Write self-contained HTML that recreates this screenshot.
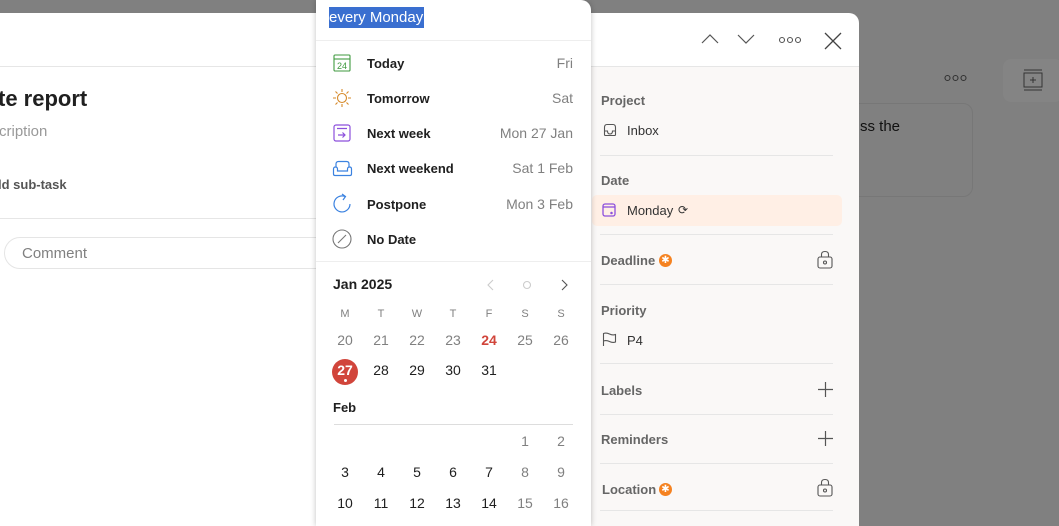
<!DOCTYPE html>
<html><head><meta charset="utf-8"><style>
*{margin:0;padding:0;box-sizing:border-box}
html,body{width:1059px;height:526px;overflow:hidden}
body{background:#808080;font-family:"Liberation Sans",sans-serif;position:relative;color:#202020}
.a{position:absolute}
.modal{left:0;top:13px;width:859px;height:513px;background:#fff;border-radius:0 10px 0 0;overflow:hidden}
.side{left:591px;top:67px;width:268px;height:459px;background:#faf8f7}
.lbl{font-size:13px;color:#666;font-weight:bold}
.hr{height:1px;background:#e6e6e6}
.pop{left:316px;top:0;width:275px;height:526px;background:#fff;border-radius:0 10px 0 0;box-shadow:0 0 6px rgba(0,0,0,.25)}
.it{font-size:13px;font-weight:bold;color:#202020}
.rt{font-size:14px;color:#808080;right:18px;text-align:right}
.cal{font-size:14px;text-align:center;width:30px;margin-left:-15px}
.wd{font-size:11px;color:#808080;text-align:center;width:30px;margin-left:-15px}
svg{position:absolute}
</style></head><body>
<svg style="left:944px;top:73px" width="24" height="10" fill="none" stroke="#333" stroke-width="1.1"><circle cx="3.5" cy="5" r="2.5"/><circle cx="11.5" cy="5" r="2.5"/><circle cx="19.5" cy="5" r="2.5"/></svg>
<div class="a" style="left:1003px;top:59px;width:60px;height:43px;background:#848484;border-radius:8px"></div>
<svg style="left:1022px;top:69px" width="22" height="22" viewBox="0 0 22 22" fill="none" stroke="#333" stroke-width="1"><path d="M2 1h18M2 21h18"/><rect x="2" y="4" width="18" height="14"/><path d="M11 8v6M8 11h6"/></svg>
<div class="a" style="left:820px;top:103px;width:153px;height:94px;border:1px solid #777;border-radius:10px"></div>
<div class="a" style="left:860px;top:118px;font-size:15px;color:#111">ss the</div>

<div class="a modal">
  <div class="a hr" style="left:0;top:53px;width:859px"></div>
  <div class="a" style="left:-2px;top:73px;font-size:22px;font-weight:bold;color:#202020">te report</div>
  <div class="a" style="left:-1px;top:110px;font-size:15px;color:#999">cription</div>
  <div class="a" style="left:-2px;top:164px;font-size:13px;color:#555;font-weight:bold">ld sub-task</div>
  <div class="a hr" style="left:0;top:205px;width:330px"></div>
  <div class="a" style="left:4px;top:224px;width:340px;height:32px;border:1px solid #e5e5e5;border-radius:16px"></div>
  <div class="a" style="left:22px;top:232px;font-size:15px;color:#808080">Comment</div>

  <svg style="left:700px;top:19px" width="20" height="14"><path d="M2 11l8-8 8 8" fill="none" stroke="#555" stroke-width="1.2"/></svg>
  <svg style="left:736px;top:19px" width="20" height="14"><path d="M2 3l8 8 8-8" fill="none" stroke="#555" stroke-width="1.2"/></svg>
  <svg style="left:778px;top:22px" width="24" height="10" fill="none" stroke="#555" stroke-width="1.1"><circle cx="4" cy="5" r="2.5"/><circle cx="12" cy="5" r="2.5"/><circle cx="20" cy="5" r="2.5"/></svg>
  <svg style="left:824px;top:19px" width="18" height="18"><path d="M1 1l16 16M17 1L1 17" stroke="#444" stroke-width="1.3"/></svg>
</div>

<div class="a side"></div>
<div class="a lbl" style="left:601px;top:93px">Project</div>
<svg style="left:603px;top:123px" width="14" height="14" fill="none" stroke="#555" stroke-width="1.1"><path d="M1.5 8V4.5Q1.5 1.5 4 1.5h6q2.5 0 2.5 3V8M1.5 8v3.5q0 1 1 1h9q1 0 1-1V8M1.5 8h3q0 3 2.5 3t2.5-3h3"/></svg>
<div class="a" style="left:627px;top:123px;font-size:13px;color:#333">Inbox</div>
<div class="a hr" style="left:600px;top:155px;width:233px"></div>
<div class="a lbl" style="left:601px;top:173px">Date</div>
<div class="a" style="left:592px;top:195px;width:250px;height:31px;background:#ffefe5;border-radius:5px"></div>
<svg style="left:602px;top:203px" width="14" height="14" fill="none" stroke="#8c4fdc" stroke-width="1.3"><rect x="1" y="1" width="12" height="12" rx="2"/><path d="M1 4h12"/><circle cx="9.5" cy="10" r=".6" fill="#8c4fdc"/></svg>
<div class="a" style="left:627px;top:203px;font-size:13px;color:#333">Monday</div>
<div class="a" style="left:678px;top:203px;font-size:12px;color:#333">⟳</div>
<div class="a hr" style="left:600px;top:234px;width:233px"></div>
<div class="a lbl" style="left:601px;top:253px">Deadline</div>
<div class="a" style="left:659px;top:254px;width:13px;height:13px;border-radius:50%;background:#f58220;color:#fff;font-size:10px;text-align:center;line-height:13px">✱</div>
<svg style="left:817px;top:250px" width="16" height="19" fill="none" stroke="#555" stroke-width="1.1"><path d="M4.5 7V4.5q0-3 3.5-3t3.5 3V7"/><rect x="1" y="7" width="14" height="11" rx="2"/><circle cx="8" cy="12.5" r="1.5"/></svg>
<div class="a hr" style="left:600px;top:284px;width:233px"></div>
<div class="a lbl" style="left:601px;top:303px">Priority</div>
<svg style="left:602px;top:332px" width="16" height="14" fill="none" stroke="#555" stroke-width="1.1"><path d="M1.5 14V1.5q3-1 6 0.5t6 0.5v7.5q-3 1-6-.5t-6-.5"/></svg>
<div class="a" style="left:627px;top:333px;font-size:13px;color:#333">P4</div>
<div class="a hr" style="left:600px;top:363px;width:233px"></div>
<div class="a lbl" style="left:601px;top:383px">Labels</div>
<svg style="left:818px;top:382px" width="15" height="15"><path d="M7.5 0v15M0 7.5h15" stroke="#555" stroke-width="1.2"/></svg>
<div class="a hr" style="left:600px;top:414px;width:233px"></div>
<div class="a lbl" style="left:601px;top:432px">Reminders</div>
<svg style="left:818px;top:431px" width="15" height="15"><path d="M7.5 0v15M0 7.5h15" stroke="#555" stroke-width="1.2"/></svg>
<div class="a hr" style="left:600px;top:463px;width:233px"></div>
<div class="a lbl" style="left:602px;top:482px">Location</div>
<div class="a" style="left:659px;top:483px;width:13px;height:13px;border-radius:50%;background:#f58220;color:#fff;font-size:10px;text-align:center;line-height:13px">✱</div>
<svg style="left:817px;top:478px" width="16" height="19" fill="none" stroke="#555" stroke-width="1.1"><path d="M4.5 7V4.5q0-3 3.5-3t3.5 3V7"/><rect x="1" y="7" width="14" height="11" rx="2"/><circle cx="8" cy="12.5" r="1.5"/></svg>
<div class="a hr" style="left:600px;top:510px;width:233px"></div>

<div class="a pop">
  <div class="a" style="left:13px;top:7px;height:21px;background:#3a6fd0;color:#fff;font-size:15px;line-height:21px;padding-right:1px">every Monday</div>
  <div class="a hr" style="left:0;top:40px;width:275px;background:#eee"></div>
  <svg style="left:17px;top:54px" width="18" height="18" fill="none" stroke="#3f9a3f" stroke-width="1.1"><rect x="1" y="1" width="16" height="16" rx="1"/><path d="M1 5h16"/><text x="9" y="15" font-size="9" fill="#3f9a3f" stroke="none" text-anchor="middle" font-family="Liberation Sans">24</text></svg>
  <svg style="left:16px;top:88px" width="20" height="20" fill="none" stroke="#d68a2a" stroke-width="1.1"><circle cx="10" cy="10" r="4.5"/><path d="M10 1v3M10 16v3M1 10h3M16 10h3M3.5 3.5l2 2M14.5 14.5l2 2M3.5 16.5l2-2M14.5 5.5l2-2"/></svg>
  <svg style="left:17px;top:124px" width="18" height="18" fill="none" stroke="#8c4fdc" stroke-width="1.2"><rect x="1" y="1" width="16" height="16" rx="2"/><path d="M4 4.5h10M5 11h7M9.5 8.5l2.5 2.5-2.5 2.5"/></svg>
  <svg style="left:16px;top:160px" width="21" height="17" fill="none" stroke="#3b82e0" stroke-width="1.2"><path d="M4 7V4q0-2.5 2.5-2.5h8Q17 1.5 17 4v3M1.5 9q0-2 2-2t2 2v2h10V9q0-2 2-2t2 2v5q0 1.5-1.5 1.5h-15Q1.5 15.5 1.5 14z"/></svg>
  <svg style="left:16px;top:193px" width="20" height="22" fill="none" stroke="#3b82e0" stroke-width="1.2"><path d="M13 3.5A8 8 0 1 0 18 11"/><path d="M10 1l3.5 2.5L11 7"/></svg>
  <svg style="left:16px;top:229px" width="20" height="20" fill="none" stroke="#777" stroke-width="1.1"><circle cx="10" cy="10" r="9"/><path d="M6 14l8-8"/></svg>
  <div class="a it" style="left:51px;top:56px">Today</div><div class="a rt" style="top:55px">Fri</div>
  <div class="a it" style="left:51px;top:91px">Tomorrow</div><div class="a rt" style="top:90px">Sat</div>
  <div class="a it" style="left:51px;top:126px">Next week</div><div class="a rt" style="top:125px">Mon 27 Jan</div>
  <div class="a it" style="left:51px;top:161px">Next weekend</div><div class="a rt" style="top:160px">Sat 1 Feb</div>
  <div class="a it" style="left:51px;top:197px">Postpone</div><div class="a rt" style="top:196px">Mon 3 Feb</div>
  <div class="a it" style="left:51px;top:232px">No Date</div>
  <div class="a hr" style="left:0;top:261px;width:275px;background:#eee"></div>
  <div class="a" style="left:17px;top:276px;font-size:14px;font-weight:bold">Jan 2025</div>
  <svg style="left:170px;top:278px" width="90" height="14" fill="none" stroke-width="1.1"><path d="M7 2L2 7l5 5" stroke="#ccc"/><circle cx="41" cy="7" r="3.5" stroke="#ccc"/><path d="M76 2l5 5-5 5" stroke="#555"/></svg>
  <div id="cal"></div>
</div>
<script>
var c=document.getElementById('cal'),x=[29,65,101,137,173,209,245],h='';
'MTWTFSS'.split('').forEach(function(d,i){h+='<div class="a wd" style="left:'+x[i]+'px;top:308px">'+d+'</div>'});
function r(arr,y){arr.forEach(function(v,i){if(!v)return;var col=v[1]||'#202020',w=v[2]||'normal';h+='<div class="a cal" style="left:'+x[i]+'px;top:'+y+'px;color:'+col+';font-weight:'+w+'">'+v[0]+'</div>'})}
var g='#808080';
r([[20,g],[21,g],[22,g],[23,g],[24,'#d1453b','bold'],[25,g],[26,g]],332);
h+='<div class="a" style="left:16px;top:359px;width:26px;height:26px;border-radius:50%;background:#d1453b"></div><div class="a" style="left:28px;top:379px;width:3px;height:3px;border-radius:50%;background:#fff"></div>';
r([[27,'#fff','bold'],[28],[29],[30],[31]],362);
h+='<div class="a" style="left:17px;top:400px;font-size:13px;font-weight:bold">Feb</div><div class="a hr" style="left:18px;top:424px;width:239px;background:#ddd"></div>';
r([0,0,0,0,0,[1,g],[2,g]],433);
r([[3],[4],[5],[6],[7],[8,g],[9,g]],464);
r([[10],[11],[12],[13],[14],[15,g],[16,g]],495);
c.innerHTML=h;
</script>
</body></html>
